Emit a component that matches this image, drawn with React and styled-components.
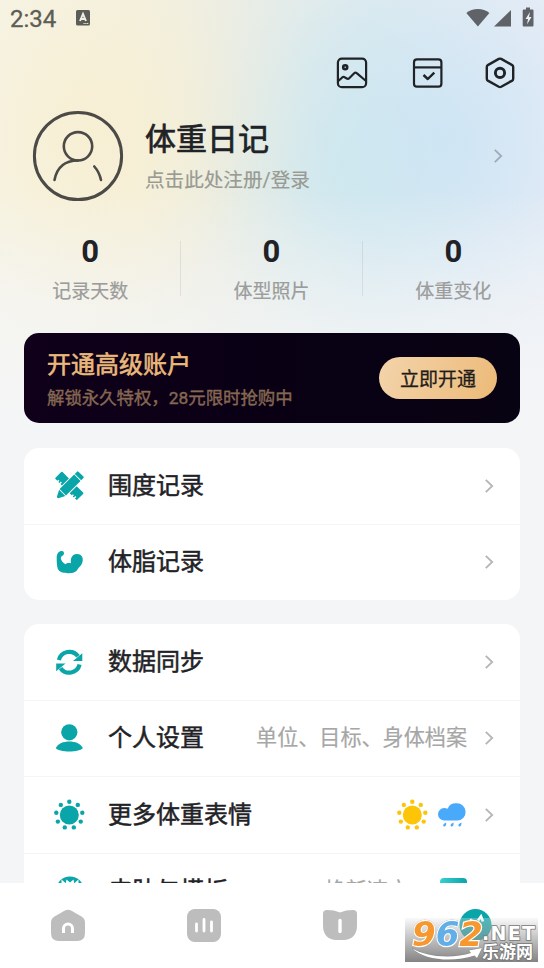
import React from 'react'
import styled, { createGlobalStyle } from 'styled-components'

const TEAL = '#0aa5a8';

const MENU_RECORDS = [
  { title: '围度记录', icon: 'ruler' },
  { title: '体脂记录', icon: 'arm' },
];

const MENU_SETTINGS = [
  { title: '数据同步', icon: 'sync' },
  { title: '个人设置', icon: 'person', detail: '单位、目标、身体档案' },
  { title: '更多体重表情', icon: 'sun', extra: 'weather' },
  { title: '皮肤与模板', icon: 'skin', detail: '焕新速衣', extra: 'theme' },
];

const STATS = [
  { label: '记录天数', value: 0 },
  { label: '体型照片', value: 0 },
  { label: '体重变化', value: 0 },
];

const Sun = ({ color }) => {
  const dots = Array.from({ length: 9 }, (_, i) => {
    const a = (i * 40 - 90) * Math.PI / 180;
    return <circle key={i} cx={16.3 + Math.cos(a) * 13.2} cy={16 + Math.sin(a) * 13.2} r="2.2" />;
  });
  return (
    <svg width="32" height="32" fill={color}>
      <circle cx="16.3" cy="16" r="9.5" />
      {dots}
    </svg>
  )
}

const Cloud = () => (
  <svg width="32" height="32" fill="#49a9fb">
    <path d="M8.500 21.500a6.300 6.300 0 0 1-.4-12.600c1.300 0 2.500.3 3.500.8A9 9 0 0 1 20.500 4.300a8.600 8.600 0 0 1 1 17.200z" />
    <path d="M10.200 23.500c-3 1-3.600 2.800-2.500 4 1.900.3 2.600-1.100 2.500-4zM17.600 23.500c-3 1-3.600 2.800-2.500 4 1.900.3 2.600-1.100 2.500-4zM25.400 23.500c-3 1-3.600 2.800-2.500 4 1.900.3 2.600-1.100 2.500-4z" />
  </svg>
)

const Chevron = ({ color = '#b3b5b8' }) => (
  <svg width="10" height="16" fill="none" stroke={color} strokeWidth="1.8">
    <path d="M1.800 1.800l6.400 6.200-6.400 6.200" />
  </svg>
)

const MenuIcon = ({ name }) => {
  if (name === 'sun') return <Sun color={TEAL} />;
  return (
    <svg width="32" height="32" fill={TEAL}>
      {name === 'ruler' && (
        <>
          <g transform="translate(16.300 15.800) rotate(-45)">
            <path d="M-4 -15.500H4a1 1 0 0 1 1 1V-5.500H-5V-7.500H-3V-9H-5V-10.500H-3.500V-12H-5V-14.500a1 1 0 0 1 1-1z" />
            <path d="M-5 5.500H5V14.500a1 1 0 0 1-1 1H-4a1 1 0 0 1-1-1V13H-3V11.500H-5V10H-3.500V8.500H-5z" />
          </g>
          <g transform="translate(16.300 15.800) rotate(45)">
            <path d="M-3.500 -16.500H3.500a1 1 0 0 1 1 1V-12.300H-4.500V-15.500a1 1 0 0 1 1-1zM-4.500 -11.400H4.500V9.200H-4.500zM-4.400 10H4.400L1 16.500q-1 1-2 0z" />
          </g>
        </>
      )}
      {name === 'arm' && (
        <path d="M3.700 12C3.500 7.500 6 5 8.800 5 10.800 5 11.500 7 10.600 8.800 9.800 10 8 10 7.800 12 7.800 14 10 17 12.500 18.200 13.500 17.200 15.500 16.800 18 17.300 17.500 14 17.800 8.300 24 8 28.500 8 30.300 11.500 29.700 15 29 19.500 25.500 21.500 24.500 23.500 22.500 27 18 27.200 15 27.200 10 27.200 6 26 4.800 22.800 3.800 20 3.700 15 3.700 12z" />
      )}
      {name === 'sync' && (
        <>
          <path d="M5.900 14A10.700 10.700 0 0 1 25 10.300M26.600 18.500A10.700 10.700 0 0 1 7.500 22.200" fill="none" stroke={TEAL} strokeWidth="4.200" />
          <path d="M29.300 7.300V15H20zM3.200 25.200V17.500H12.500z" />
        </>
      )}
      {name === 'person' && (
        <>
          <circle cx="16.300" cy="10.300" r="8.100" />
          <path d="M2.800 26C5 21.500 10.500 19.500 16.300 19.500s11.300 2 13.500 6.500C29 28.300 22 29.500 16.300 29.500S3.600 28.300 2.800 26z" />
        </>
      )}
      {name === 'skin' && (
        <>
          <circle cx="17" cy="15.500" r="14" />
          <path d="M8.500 4.500l4 3.500-4 4zM25.500 4.500l-4 3.500 4 4zM13.500 4.500l3.500 3 3.500-3 1 5h-9z" fill="#fff" />
        </>
      )}
    </svg>
  )
}

const MenuRow = ({ item }) => (
  <Row>
    <MenuIcon name={item.icon} />
    <RowTitle>{item.title}</RowTitle>
    {item.detail && <RowDetail $spaced={item.extra}>{item.detail}</RowDetail>}
    {item.extra === 'weather' && <Weather><Sun color="#fdc408" /><Cloud /></Weather>}
    {item.extra === 'theme' && <ThemeSwatch />}
    <Chevron />
  </Row>
)

const StatusBar = () => (
  <Status>
    <Clock>2:34</Clock>
    <svg width="14" height="16" fill="#5c5d56">
      <rect y="0" width="14" height="15.500" rx="1.500" />
      <path d="M4 11L7 4l3 7M5 9h4" fill="none" stroke="#f2f1e6" strokeWidth="1.900" />
      <path d="M7.500 13.500h5" stroke="#f2f1e6" strokeDasharray="1.200 .6" />
    </svg>
    <StatusRight>
      <svg width="68" height="22" fill="#5f6368">
        <path d="M.3 6C6.500.6 17.200.6 23.400 6L11.900 19.500z" />
        <path d="M45 3v16.500H28z" />
        <path d="M60 .5h4v2h2.500a1 1 0 0 1 1 1v15a1 1 0 0 1-1 1H57.700a1 1 0 0 1-1-1v-15a1 1 0 0 1 1-1H60z" />
        <path d="M64 5l-4.500 7h2.500l-1 5.500 4.500-7.500H63z" fill="#eaf0f6" />
      </svg>
    </StatusRight>
  </Status>
)

const HeaderActions = () => (
  <Actions>
    <svg width="32" height="32" fill="none" stroke="#1f2226" strokeWidth="2.200" strokeLinejoin="round">
      <rect x="1.900" y="1.600" width="28.200" height="28.600" rx="4" />
      <circle cx="9.200" cy="10.300" r="2" strokeWidth="2.600" />
      <path d="M2 24.200l4.500-4q1.200-.8 2.500.3l2.200 1.200q1.200.3 2-.5l5-5q1.200-1.200 2.500 0L30 24" />
    </svg>
    <svg width="32" height="32" fill="none" stroke="#1f2226" strokeWidth="2.200" strokeLinejoin="round">
      <rect x="2" y="2.400" width="27.400" height="27.300" rx="3" />
      <path d="M2 10.400h27.400" />
      <path d="M11.500 18l4.300 4 6.500-6.400" strokeWidth="2.400" />
    </svg>
    <svg width="32" height="32" fill="none" stroke="#1f2226" strokeWidth="2.400" strokeLinejoin="round">
      <path d="M14.800 1.900q1.200-.6 2.400 0l11 6.200q1 .6 1 1.800v11.900q0 1.200-1 1.800l-11 6.200q-1.200.6-2.400 0l-11-6.200q-1-.6-1-1.800V9.900q0-1.200 1-1.800z" />
      <circle cx="16" cy="15.900" r="4.600" strokeWidth="2.900" />
    </svg>
  </Actions>
)

const Avatar = () => (
  <svg width="92" height="92" fill="none" stroke="#4b4a47" strokeLinecap="round">
    <circle cx="46" cy="46" r="43.600" strokeWidth="3" />
    <circle cx="46" cy="36.300" r="14.200" strokeWidth="2.600" />
    <path d="M46 50.500C33 50.500 25 57 22.500 70M62.300 56.500q5 5.500 6.700 13.500" strokeWidth="2.600" />
  </svg>
)

const Watermark = () => (
  <Mark>
    <MarkNumber><span>9</span><b>6</b><span>2</span></MarkNumber>
    <MarkNet>.NET</MarkNet>
    <MarkName>乐游网</MarkName>
    <MarkSwoosh width="72" height="14">
      <path d="M1 1C14 10 42 12 60 6L58 3.500 71 1 66 11 63.500 8.500C42 16 12 13 1 1z" fill="#fff" stroke="#777" strokeWidth=".6" />
    </MarkSwoosh>
  </Mark>
)

const App = () => {
  return (
    <Screen>
      <GlobalStyle />
      <Content>
        <StatusBar />
        <HeaderActions />
        <Profile>
          <Avatar />
          <ProfileText>
            <h1>体重日记</h1>
            <p>点击此处注册/登录</p>
          </ProfileText>
          <Chevron color="#9fabb5" />
        </Profile>
        <Stats>
          {STATS.map((s) => (
            <Stat key={s.label}>
              <strong>{s.value}</strong>
              <span>{s.label}</span>
            </Stat>
          ))}
        </Stats>
        <Banner>
          <BannerText>
            <h2>开通高级账户</h2>
            <p>解锁永久特权，28元限时抢购中</p>
          </BannerText>
          <BannerButton>立即开通</BannerButton>
        </Banner>
        <Card>
          {MENU_RECORDS.map((item) => <MenuRow key={item.title} item={item} />)}
        </Card>
        <Card>
          {MENU_SETTINGS.map((item) => <MenuRow key={item.title} item={item} />)}
        </Card>
      </Content>
      <TabBar>
        <Tab>
          <svg width="36" height="36" fill="#bdbdbd">
            <path d="M14.500 2.800q3.500-2 7 0l10 5.800q3.500 2 3.500 6V25q0 8-8 8H9q-8 0-8-8V14.600q0-4 3.500-6z" />
            <path d="M13.500 25v-4.500a4.500 4.500 0 0 1 9 0V25" fill="none" stroke="#fff" strokeWidth="3" />
          </svg>
        </Tab>
        <Tab>
          <svg width="36" height="36" fill="#bdbdbd">
            <rect x="1" y="1" width="34" height="33" rx="8" />
            <path d="M10.500 16v7M18 11.500V23M25.500 14v9" stroke="#fff" strokeWidth="2.800" strokeLinecap="round" />
          </svg>
        </Tab>
        <Tab>
          <svg width="36" height="36" fill="#bdbdbd">
            <path d="M1 5.500Q1 2 5 2c5 0 9 .8 13 2.500C22 2.800 26 2 31 2q4 0 4 3.500V18c0 9-6 14-13 14h-8C7 32 1 27 1 18z" />
            <path d="M18 12.500v11" stroke="#fff" strokeWidth="3.400" strokeLinecap="round" />
          </svg>
        </Tab>
        <Tab>
          <svg width="36" height="36">
            <circle cx="17.500" cy="17" r="16" fill={TEAL} />
            <path d="M10 15l3-3 3 3M20 12.500l3-4 2 5" fill="none" stroke="#fff" strokeWidth="2.600" />
          </svg>
        </Tab>
      </TabBar>
      <Watermark />
    </Screen>
  )
}

export default App

const GlobalStyle = createGlobalStyle`
  * {
    box-sizing: border-box;
  }

  body {
    margin: 0;
    font-family: Roboto, "Noto Sans CJK SC", sans-serif;
    color: #1f2226;
  }

  h1, h2, p {
    margin: 0;
    font-weight: 400;
    white-space: nowrap;
  }

  svg {
    display: block;
    flex-shrink: 0;
  }
`

const Screen = styled.div`
  width: 544px;
  height: 968px;

  display: flex;
  flex-direction: column;

  position: relative;
  overflow: hidden;
  background-color: white;
`

const Content = styled.div`
  height: 883px;
  padding: 0 24px;
  overflow: hidden;

  background:
    linear-gradient(180deg, rgba(244, 245, 247, 0) 190px, rgba(244, 245, 247, 0.6) 320px, #f4f5f7 430px),
    radial-gradient(ellipse 230px 250px at 92px 135px, rgba(249, 238, 203, 0.65), rgba(249, 238, 203, 0.4) 40%, rgba(249, 238, 203, 0.1) 75%, rgba(249, 238, 203, 0)),
    radial-gradient(ellipse 200px 240px at 350px 165px, rgba(200, 231, 238, 0.65), rgba(200, 231, 238, 0.38) 35%, rgba(200, 231, 238, 0.08) 75%, rgba(200, 231, 238, 0)),
    radial-gradient(ellipse 250px 260px at 445px 140px, rgba(203, 226, 247, 0.8), rgba(203, 226, 247, 0.45) 38%, rgba(203, 226, 247, 0.08) 75%, rgba(203, 226, 247, 0)),
    linear-gradient(90deg, #f6f4e9 0, #f3f1e2 130px, #eeeee4 200px, #e8ede8 280px, #e1ecee 370px, #e9eef5 544px);
`

const Status = styled.div`
  height: 57px;
  margin: 0 -14px;

  display: flex;
  align-items: flex-start;
  padding-top: 10px;
`

const Clock = styled.span`
  width: 66px;
  margin-top: -5px;
  font-size: 24px;
  line-height: 28px;
  color: #5c5d56;
  -webkit-text-stroke: 0.3px currentColor;
`

const StatusRight = styled.div`
  margin-left: auto;
  margin-top: -3px;
`

const Actions = styled.div`
  height: 32px;
  padding-right: 4px;

  display: flex;
  justify-content: flex-end;
  gap: 44px;

  svg:last-child {
    margin-left: -4px;
  }
`

const Profile = styled.div`
  height: 92px;
  margin-top: 21px;
  padding: 0 17px 0 8px;

  display: flex;
  align-items: center;
`

const ProfileText = styled.div`
  flex: 1;
  padding: 2px 0 0 21px;

  h1 {
    font-size: 31px;
    line-height: 44px;
    -webkit-text-stroke: 0.7px currentColor;
  }

  p {
    margin-top: 4px;
    font-size: 19.6px;
    line-height: 30px;
    color: #989a93;
    -webkit-text-stroke: 0.2px currentColor;
  }
`

const Stats = styled.div`
  height: 72px;
  margin: 32px -24px 0;

  display: grid;
  grid-template-columns: repeat(3, 1fr);
`

const Stat = styled.div`
  padding-right: 1px;

  display: flex;
  flex-direction: column;
  align-items: center;

  background: linear-gradient(rgba(120, 130, 140, 0.16), rgba(120, 130, 140, 0.16)) right 7px / 1px 55px no-repeat;

  &:last-child {
    background: none;
    padding-right: 0;
  }

  strong {
    font-size: 31px;
    line-height: 36px;
  }

  span {
    margin-top: 7px;
    font-size: 19px;
    line-height: 30px;
    color: #9b9c9b;
    -webkit-text-stroke: 0.2px currentColor;
  }
`

const Banner = styled.div`
  height: 90px;
  margin-top: 27px;
  margin-bottom: 25px;
  padding: 0 23px;

  display: flex;
  align-items: center;
  justify-content: space-between;

  border-radius: 15px;
  background: linear-gradient(90deg, #10001a, #090014 50%, #080313);
`

const BannerText = styled.div`
  padding-top: 3px;

  h2 {
    font-size: 24px;
    line-height: 34px;
    color: #e9b87c;
    -webkit-text-stroke: 0.6px currentColor;
  }

  p {
    margin-top: 2px;
    font-size: 17.400px;
    line-height: 28px;
    color: #856752;
    -webkit-text-stroke: 0.4px currentColor;
  }
`

const BannerButton = styled.button`
  width: 118px;
  height: 42px;
  padding: 0 0 2px;

  border: none;
  border-radius: 21px;
  background: linear-gradient(110deg, #f3d4ab, #ecba78);

  font-family: inherit;
  font-size: 19px;
  color: #1f1c1a;
  -webkit-text-stroke: 0.3px currentColor;
`

const Card = styled.div`
  margin-top: 24px;
  border-radius: 15px;
  background-color: white;
`

const Row = styled.div`
  height: 75.500px;
  padding: 0 26px 0 29px;

  display: flex;
  align-items: center;

  & + & {
    height: 76.500px;
    border-top: 1px solid #f4f5f6;
  }
`

const RowTitle = styled.div`
  flex: 1;
  padding-left: 23px;

  font-size: 24px;
  line-height: 36px;
  white-space: nowrap;
  -webkit-text-stroke: 0.5px currentColor;
`

const RowDetail = styled.div`
  margin-right: ${({ $spaced }) => $spaced ? '31px' : '17px'};

  font-size: 21.100px;
  line-height: 32px;
  white-space: nowrap;
  color: #a6a6a6;
  -webkit-text-stroke: 0.2px currentColor;
`

const Weather = styled.div`
  margin-right: 16px;
  display: flex;
  gap: 8px;
`

const ThemeSwatch = styled.div`
  width: 27px;
  height: 27px;
  margin-right: 17px;

  border-radius: 4px;
  background: linear-gradient(90deg, #37cfd0, #0aa5a8);
`

const TabBar = styled.nav`
  height: 85px;

  display: grid;
  grid-template-columns: repeat(4, 1fr);

  background-color: white;
`

const Tab = styled.div`
  padding-top: 25px;

  display: flex;
  justify-content: center;
`

/* sits on top of the tab bar */
const Mark = styled.div`
  width: 133px;
  height: 44px;

  position: absolute;
  left: 405px;
  top: 918px;

  background: linear-gradient(180deg, rgba(235, 235, 235, 0.3), rgba(125, 125, 125, 0.95));
  font-family: "DejaVu Sans", "Noto Sans CJK SC", sans-serif;
  font-weight: 700;
  line-height: 1;
  paint-order: stroke fill;
`

const MarkNumber = styled.div`
  position: absolute;
  left: 7px;
  top: -1px;

  font-size: 34px;
  font-style: italic;
  color: #f7982e;
  -webkit-text-stroke: 2.400px white;
  filter: drop-shadow(0 0 0.6px #888);

  b {
    color: #62aee6;
  }
`

const MarkNet = styled.div`
  position: absolute;
  left: 77px;
  top: 6px;

  font-size: 19px;
  line-height: 19px;
  letter-spacing: 1.300px;
  color: white;
  -webkit-text-stroke: 1.600px #777;
`

const MarkName = styled.div`
  position: absolute;
  left: 77px;
  top: 26px;

  font-size: 17px;
  color: white;
  -webkit-text-stroke: 1.600px #777;
`

const MarkSwoosh = styled.svg`
  position: absolute;
  left: 6px;
  top: 29px;
`
